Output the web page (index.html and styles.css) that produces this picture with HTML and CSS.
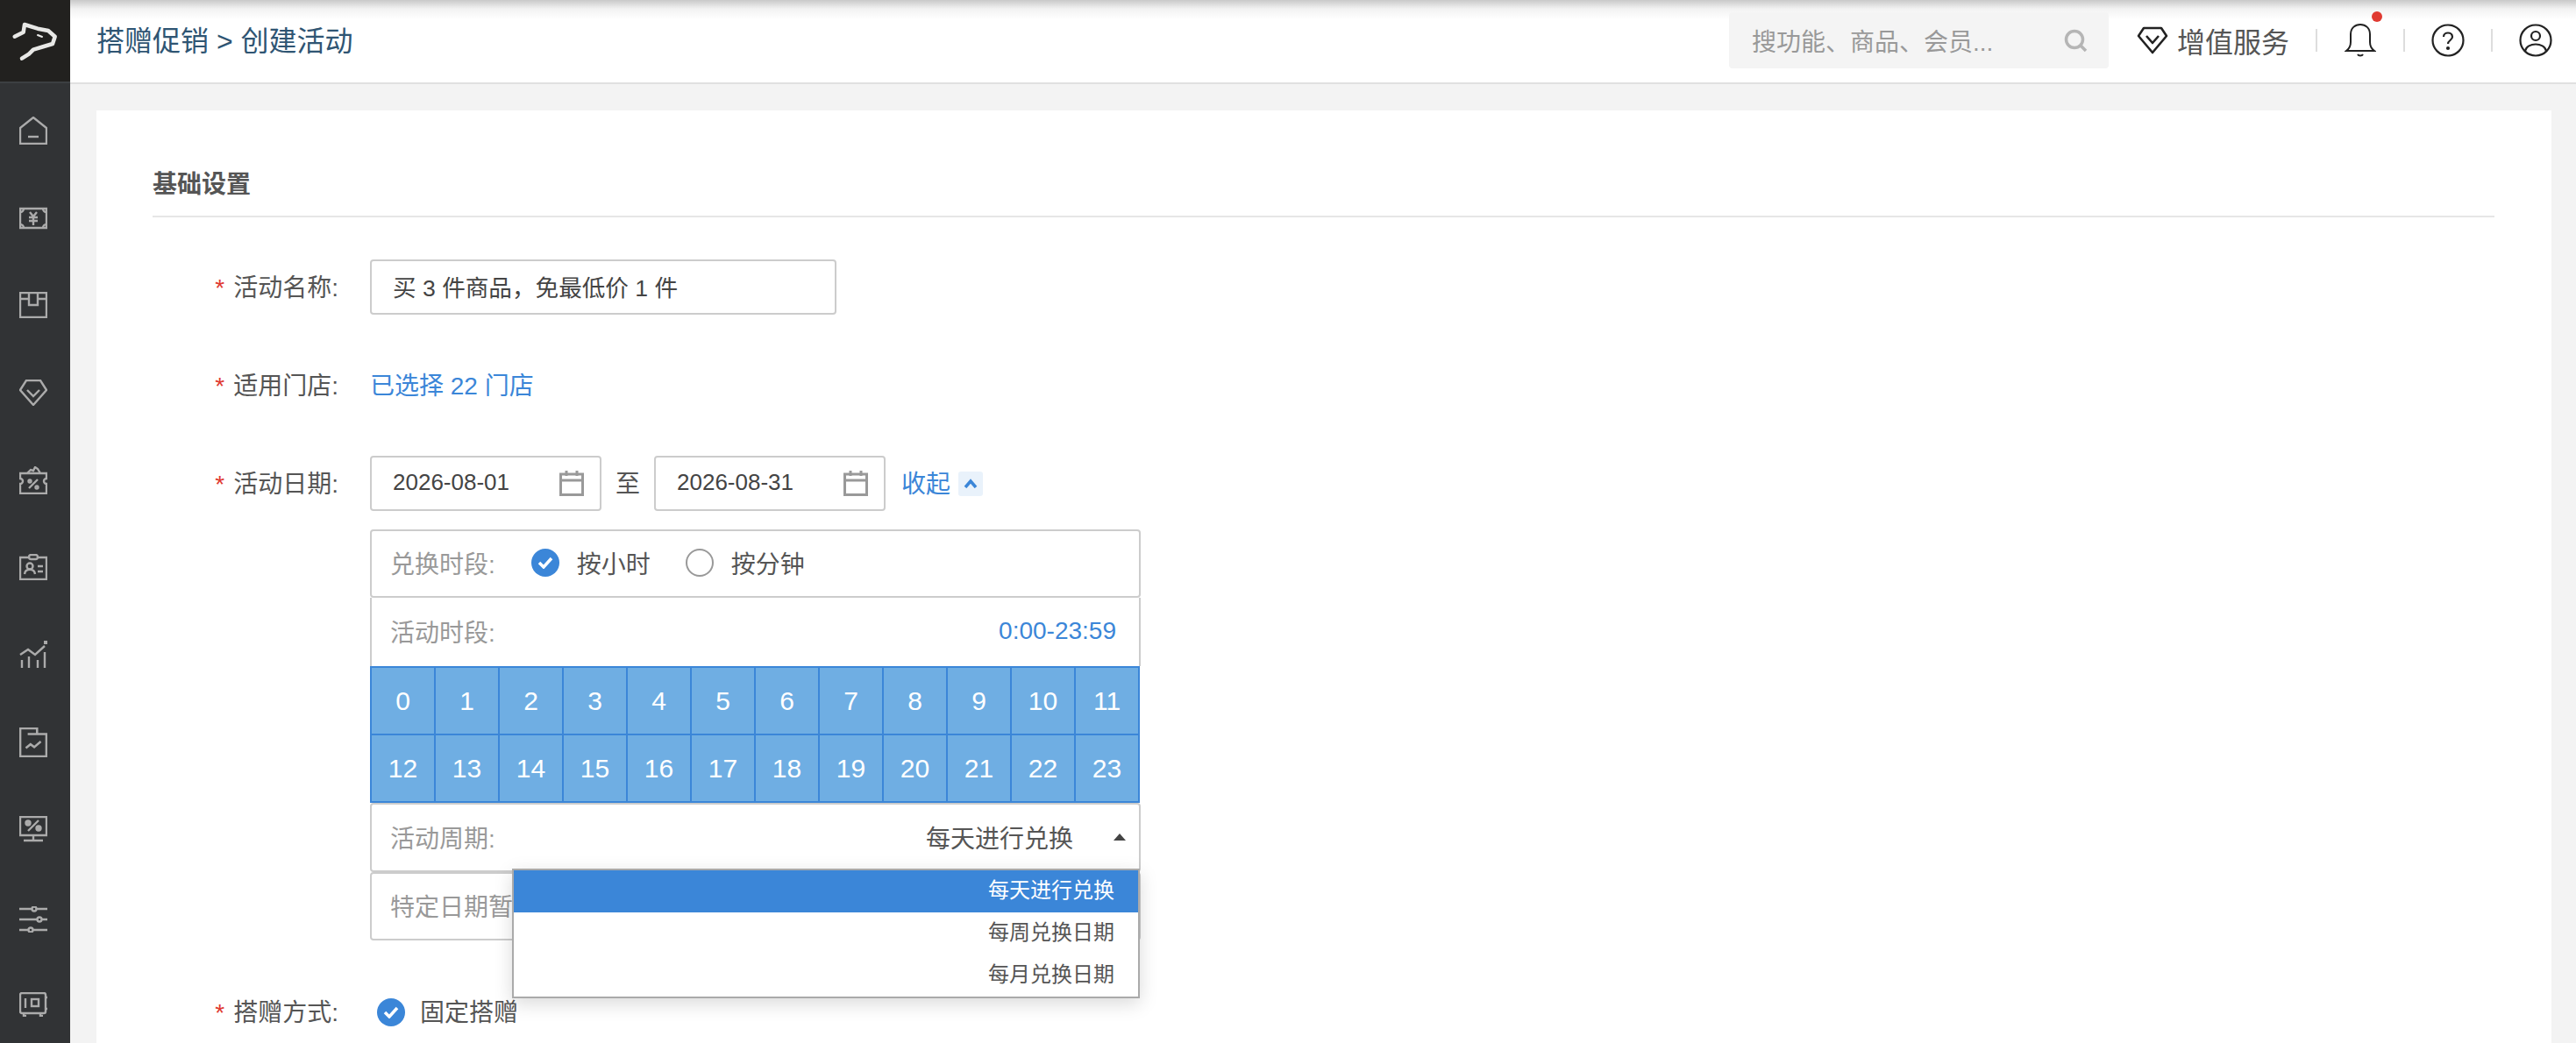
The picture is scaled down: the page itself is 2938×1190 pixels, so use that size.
FILE: index.html
```html
<!DOCTYPE html>
<html lang="zh-CN">
    <head>
        <meta charset="UTF-8">
        <meta name="viewport" content="width=device-width, initial-scale=1.0">
        <title>创建活动</title>
        <link rel="stylesheet" href="styles.css">
    </head>
    <body>
        <div class="app">
            <aside class="sidebar">
                <div class="logo">
                    <svg width="80" height="93" viewBox="0 0 80 93" fill="none" stroke="#e8e8e6" stroke-width="4.500" stroke-linejoin="round" stroke-linecap="round">
                        <path d="M16.7 41.7L26.7 36.7 28 28 43 32.7 55 35 62.7 41.7 60 50 50 53 38 56.7 33 61.7 25 66.7"/>
                        <path d="M43 40l5 2" stroke-width="2"/>
                    </svg>
                </div>
                <nav class="menu">
                    <a class="menu-item"><svg class="menu-icon" viewBox="0 0 32 32"><path d="M1 31V13L16 1l15 12v18z"/><path d="M10 23h12"/></svg></a>
                    <a class="menu-item"><svg class="menu-icon" viewBox="0 0 32 26"><path d="M1 2h30v22H1z"/><path d="M5 2a4 4 0 0 1-4 4M27 2a4 4 0 0 0 4 4M5 24a4 4 0 0 0-4-4M27 24a4 4 0 0 1 4-4"/><path d="M12 6l4 5 4-5M11 12h10M11 16h10M16 11v10"/></svg></a>
                    <a class="menu-item"><svg class="menu-icon" viewBox="0 0 32 30"><path d="M1 1h30v28H1z"/><path d="M1 8h9M22 8h9M11 1v14h10V1"/></svg></a>
                    <a class="menu-item"><svg class="menu-icon" viewBox="0 0 32 30"><path d="M8 1h16l7 11-15 17L1 12z"/><path d="M9 12l7 7 7-7"/></svg></a>
                    <a class="menu-item"><svg class="menu-icon" viewBox="0 0 32 32"><path d="M1 8h30v6a3 3 0 0 0 0 6v11H1V20a3 3 0 0 0 0-6z"/><path d="M9 8l4-4 3 1 2-4 3 2 3 5M11 25l10-10"/><circle cx="12" cy="17" r="1.5"/><circle cx="20" cy="24" r="1.5"/></svg></a>
                    <a class="menu-item"><svg class="menu-icon" viewBox="0 0 32 30"><path d="M1 4h30v25H1z"/><rect x="11" y="1" width="10" height="5" rx="2.5" fill="#313335"/><circle cx="12" cy="14" r="3.5"/><path d="M6 23c1-7 11-7 12 0M21 14h6M21 20h6"/></svg></a>
                    <a class="menu-item"><svg class="menu-icon" viewBox="0 0 32 32"><path d="M1 16l9-6 8 6 11-10"/><path d="M3 22v9M11 18v13M21 22v9M29 13v18"/><rect x="28" y="0" width="4" height="4" fill="#a9a9a9" stroke="none"/></svg></a>
                    <a class="menu-item"><svg class="menu-icon" viewBox="0 0 30 32"><path d="M9 7h20v24H1V1h18v6"/><path d="M7 22l5-4 4 3 7-6"/></svg></a>
                    <a class="menu-item"><svg class="menu-icon" viewBox="0 0 32 30"><path d="M1 1h30v21H1zM16 22v6M5 28h22M10 17l12-12"/><circle cx="10" cy="8" r="2.5" fill="#a9a9a9"/><circle cx="22" cy="14" r="2.5" fill="#a9a9a9"/></svg></a>
                    <a class="menu-item"><svg class="menu-icon sliders" viewBox="0 0 32 30"><path d="M0 3h32M0 15h32M0 27h32"/><circle cx="17" cy="3" r="2.5" fill="#313335"/><circle cx="23" cy="15" r="2.5" fill="#313335"/><circle cx="13" cy="27" r="2.5" fill="#313335"/></svg></a>
                    <a class="menu-item"><svg class="menu-icon" viewBox="0 0 32 28"><rect x="1" y="1" width="29" height="23" rx="2"/><path d="M7 7v11M30 6h2M30 19h2M5 24v3h3M24 24v3h3"/><rect x="14" y="8" width="8" height="8"/></svg></a>
                </nav>
            </aside>
            <div class="main">
                <header class="topbar">
                    <div class="crumb">搭赠促销 &gt; 创建活动</div>
                    <div class="search">
                        <span>搜功能、商品、会员...</span>
                        <svg width="28" height="28" viewBox="0 0 28 28" fill="none" stroke="#b5b5b5" stroke-width="3.500"><circle cx="13" cy="13" r="9.500"/><path d="M20 20l6 6"/></svg>
                    </div>
                    <div class="vip">
                        <svg width="36" height="32" viewBox="0 0 36 32" fill="none" stroke="#222" stroke-width="2.600" stroke-linejoin="round"><path d="M8 2h20l6 9-16 19L2 11z"/><path d="M11 11l7 8 7-8"/></svg>
                        <span>增值服务</span>
                    </div>
                    <span class="sep"></span>
                    <div class="top-icon bell">
                        <svg width="36" height="40" viewBox="0 0 36 40" fill="none" stroke="#222" stroke-width="2"><path d="M2 32h32c-3-2-5-5-5-10v-9C29 6 24 2 18 2S7 6 7 13v9c0 5-2 8-5 10z"/><path d="M15 36c1 2 5 2 6 0"/></svg>
                        <i class="dot"></i>
                    </div>
                    <span class="sep"></span>
                    <div class="top-icon">
                        <svg width="38" height="38" viewBox="0 0 38 38" fill="none" stroke="#222" stroke-width="2.200"><circle cx="19" cy="19" r="17.500"/><path d="M14 15c0-6 10-6 10 0 0 4-5 4-5 8"/><circle cx="19" cy="28" r="1" fill="#222"/></svg>
                    </div>
                    <span class="sep"></span>
                    <div class="top-icon">
                        <svg width="38" height="38" viewBox="0 0 38 38" fill="none" stroke="#222" stroke-width="2.200"><circle cx="19" cy="19" r="17.500"/><circle cx="19" cy="14" r="5"/><path d="M7 31c2-10 22-10 24 0"/></svg>
                    </div>
                </header>
                <main class="content">
                    <section class="card">
                        <h3 class="section-title">基础设置</h3>

                        <div class="form-row">
                            <label class="form-label"><em>*</em>活动名称:</label>
                            <div class="input name-input">买 3 件商品，免最低价 1 件</div>
                        </div>

                        <div class="form-row">
                            <label class="form-label"><em>*</em>适用门店:</label>
                            <a class="link row-link">已选择 22 门店</a>
                        </div>

                        <div class="form-row date-row">
                            <label class="form-label"><em>*</em>活动日期:</label>
                            <div class="input date-input">
                                <span>2026-08-01</span>
                                <svg class="cal" viewBox="0 0 28 30"><path d="M1.500 5h25v23.500h-25zM1.500 12h25M8 1v6M20 1v6"/></svg>
                            </div>
                            <span class="to">至</span>
                            <div class="input date-input">
                                <span>2026-08-31</span>
                                <svg class="cal" viewBox="0 0 28 30"><path d="M1.500 5h25v23.500h-25zM1.500 12h25M8 1v6M20 1v6"/></svg>
                            </div>
                            <a class="link fold row-link">收起</a>
                            <span class="fold-btn">
                                <svg width="16" height="11" viewBox="0 0 16 11" fill="none" stroke="#3b86d8" stroke-width="3.500"><path d="M2 10l6-7 6 7"/></svg>
                            </span>
                        </div>

                        <div class="panel">
                            <div class="panel-row">
                                <span class="panel-label">兑换时段:</span>
                                <span class="radio checked">
                                    <svg width="18" height="14" viewBox="0 0 18 14" fill="none" stroke="#fff" stroke-width="3.500"><path d="M2 7l5 5 9-10"/></svg>
                                </span>
                                <span class="radio-text">按小时</span>
                                <span class="radio"></span>
                                <span class="radio-text">按分钟</span>
                            </div>
                            <div class="panel-row spread">
                                <span class="panel-label">活动时段:</span>
                                <a class="link">0:00-23:59</a>
                            </div>
                            <div class="hours" id="hours"></div>
                            <div class="panel-row period">
                                <span class="panel-label">活动周期:</span>
                                <span class="period-value">每天进行兑换<i class="caret"></i></span>
                            </div>
                            <div class="panel-row">
                                <span class="panel-label">特定日期暂</span>
                            </div>
                            <ul class="dropdown">
                                <li class="active">每天进行兑换</li>
                                <li>每周兑换日期</li>
                                <li>每月兑换日期</li>
                            </ul>
                        </div>

                        <div class="form-row gift-row">
                            <label class="form-label"><em>*</em>搭赠方式:</label>
                            <span class="radio checked">
                                <svg width="18" height="14" viewBox="0 0 18 14" fill="none" stroke="#fff" stroke-width="3.500"><path d="M2 7l5 5 9-10"/></svg>
                            </span>
                            <span class="radio-text">固定搭赠</span>
                        </div>
                    </section>
                </main>
            </div>
        </div>

        <script>
            // 0-23 小时格子
            const hours = document.getElementById('hours');
            for (let i = 0; i < 24; i++) {
                const cell = document.createElement('span');
                cell.className = 'hour';
                cell.textContent = i;
                hours.appendChild(cell);
            }
        </script>
    </body>
</html>
```

FILE: styles.css
```css
* {
    box-sizing: border-box;
}
html, body {
    height: 100%;
}
body {
    margin: 0;
    overflow: hidden;
    font-family: "Liberation Sans", "Noto Sans CJK SC", sans-serif;
    font-size: 28px;
    color: #555;
    background-color: #f3f3f3;
}
.app {
    display: flex;
    height: 1190px;
}

/* 左侧菜单 */
.sidebar {
    flex: 0 0 80px;
    background-color: #313335;
}
.logo {
    height: 95px;
    display: flex;
    align-items: center;
    justify-content: center;
    background-color: #22211f;
    border-bottom: 2px solid #3c3f42;
}
.menu {
    display: flex;
    flex-direction: column;
    padding-top: 4px;
}
.menu-item {
    height: 99.7px;
    display: flex;
    align-items: center;
    justify-content: center;
}
.menu-icon {
    width: 32px;
    fill: none;
    stroke: #ababab;
    stroke-width: 2.4;
    margin-right: 4px;
}
.sliders {
    margin-top: 6px;
}

/* 顶部 */
.main {
    flex: 1;
    min-width: 0;
}
.topbar {
    height: 96px;
    display: flex;
    align-items: center;
    padding: 0 27px 2px 30px;
    background: linear-gradient(#c9c9c9 0, #f2f2f2 10px, #fff 22px);
    border-bottom: 2px solid #e0e0e0;
}
.crumb {
    font-size: 32px;
    color: #2f5573;
    margin-right: auto;
    padding-bottom: 4px;
}
.search {
    width: 433px;
    height: 64px;
    padding: 0 24px 0 26px;
    display: flex;
    align-items: center;
    justify-content: space-between;
    background-color: #f4f4f4;
    border-radius: 4px;
    font-size: 28px;
    color: #999;
}
.vip {
    display: flex;
    align-items: center;
    gap: 10px;
    margin-left: 32px;
    font-size: 32px;
    color: #555;
}
.sep {
    width: 2px;
    height: 26px;
    margin: 0 30px;
    background-color: #ddd;
}
.top-icon {
    position: relative;
    width: 38px;
    display: flex;
    justify-content: center;
}
.dot {
    position: absolute;
    top: -13px;
    right: -6px;
    width: 12px;
    height: 12px;
    border-radius: 50%;
    background-color: #e03a31;
}

/* 内容卡片 */
.content {
    padding: 30px 28px 0 30px;
}
.card {
    height: 1100px;
    padding: 64px 65px 0 64px;
    background-color: #fff;
}
.section-title {
    margin: 0 0 48px;
    height: 58px;
    line-height: 42px;
    font-size: 28px;
    font-weight: bold;
    color: #555;
    border-bottom: 2px solid #e6e6e6;
}
.form-row {
    display: flex;
    align-items: center;
    min-height: 63px;
    margin-bottom: 49px;
}
.form-label {
    width: 212px;
    margin-right: 36px;
    padding-bottom: 3px;
    text-align: right;
    flex-shrink: 0;
}
.form-label em {
    font-style: normal;
    color: #e03a31;
    margin-right: 10px;
}
.input {
    height: 63px;
    display: flex;
    align-items: center;
    padding: 0 24px 2px;
    border: 2px solid #ccc;
    border-radius: 4px;
    font-size: 26px;
    color: #444;
}
.name-input {
    width: 532px;
    font-size: 26.6px;
}
.date-input {
    width: 264px;
    justify-content: space-between;
    padding-right: 18px;
}
.cal {
    width: 28px;
    height: 30px;
    fill: none;
    stroke: #999;
    stroke-width: 3;
}
.to {
    width: 60px;
    padding-bottom: 3px;
    text-align: center;
    color: #555;
}
.link {
    color: #3b86d8;
}
.row-link {
    padding-bottom: 3px;
}
.fold {
    margin-left: 18px;
}
.fold-btn {
    width: 28px;
    height: 28px;
    margin-left: 9px;
    display: flex;
    align-items: center;
    justify-content: center;
    background-color: #e9f2fb;
    border-radius: 3px;
}
.date-row {
    margin-bottom: 21px;
}
.gift-row {
    margin-top: 50px;
}
.gift-row .radio {
    margin-left: 8px;
}
.gift-row .radio-text {
    margin-left: 17px;
    padding-bottom: 3px;
}

/* 时段面板 */
.panel {
    position: relative;
    width: 879px;
    margin-left: 248px;
}
.panel-row {
    height: 78px;
    display: flex;
    align-items: center;
    padding: 0 26px 2px 21px;
    border: 2px solid #ccc;
    border-radius: 4px;
}
.spread {
    justify-content: space-between;
    border-top: 0;
    border-bottom: 0;
    border-radius: 0;
}
.period {
    justify-content: space-between;
    height: 79px;
    padding-right: 15px;
}
.panel-label {
    color: #999;
    margin-right: 41px;
}
.spread .panel-label, .period .panel-label {
    margin-right: 0;
}
.radio {
    width: 32px;
    height: 32px;
    border-radius: 50%;
    border: 2px solid #999;
    display: inline-flex;
    align-items: center;
    justify-content: center;
    flex-shrink: 0;
}
.radio.checked {
    border: 0;
    background-color: #3b86d8;
}
.radio-text {
    margin: 0 40px 0 20px;
}
.period-value {
    display: flex;
    align-items: center;
}
.caret {
    width: 0;
    height: 0;
    margin-left: 46px;
    border-left: 7px solid transparent;
    border-right: 7px solid transparent;
    border-bottom: 8px solid #444;
}
.hours {
    display: grid;
    grid-template-columns: repeat(12, 1fr);
    margin-right: 1px;
    background-color: #6faee3;
    border: 2px solid #3b86d8;
    border-bottom: 0;
    border-right: 0;
}
.hour {
    height: 77px;
    display: flex;
    align-items: center;
    justify-content: center;
    color: #fff;
    font-size: 30px;
    border-right: 2px solid #3b86d8;
    border-bottom: 2px solid #3b86d8;
}
.dropdown {
    position: absolute;
    left: 162px;
    right: 1px;
    top: 387px;
    margin: 0;
    padding: 0;
    list-style: none;
    background-color: #fff;
    border: 2px solid #aaa;
    box-shadow: 0 6px 20px rgba(0, 0, 0, 0.15);
}
.dropdown li {
    height: 48px;
    line-height: 45px;
    padding-right: 27px;
    text-align: right;
    font-size: 24px;
}
.dropdown .active {
    background-color: #3b86d8;
    color: #fff;
}
```
